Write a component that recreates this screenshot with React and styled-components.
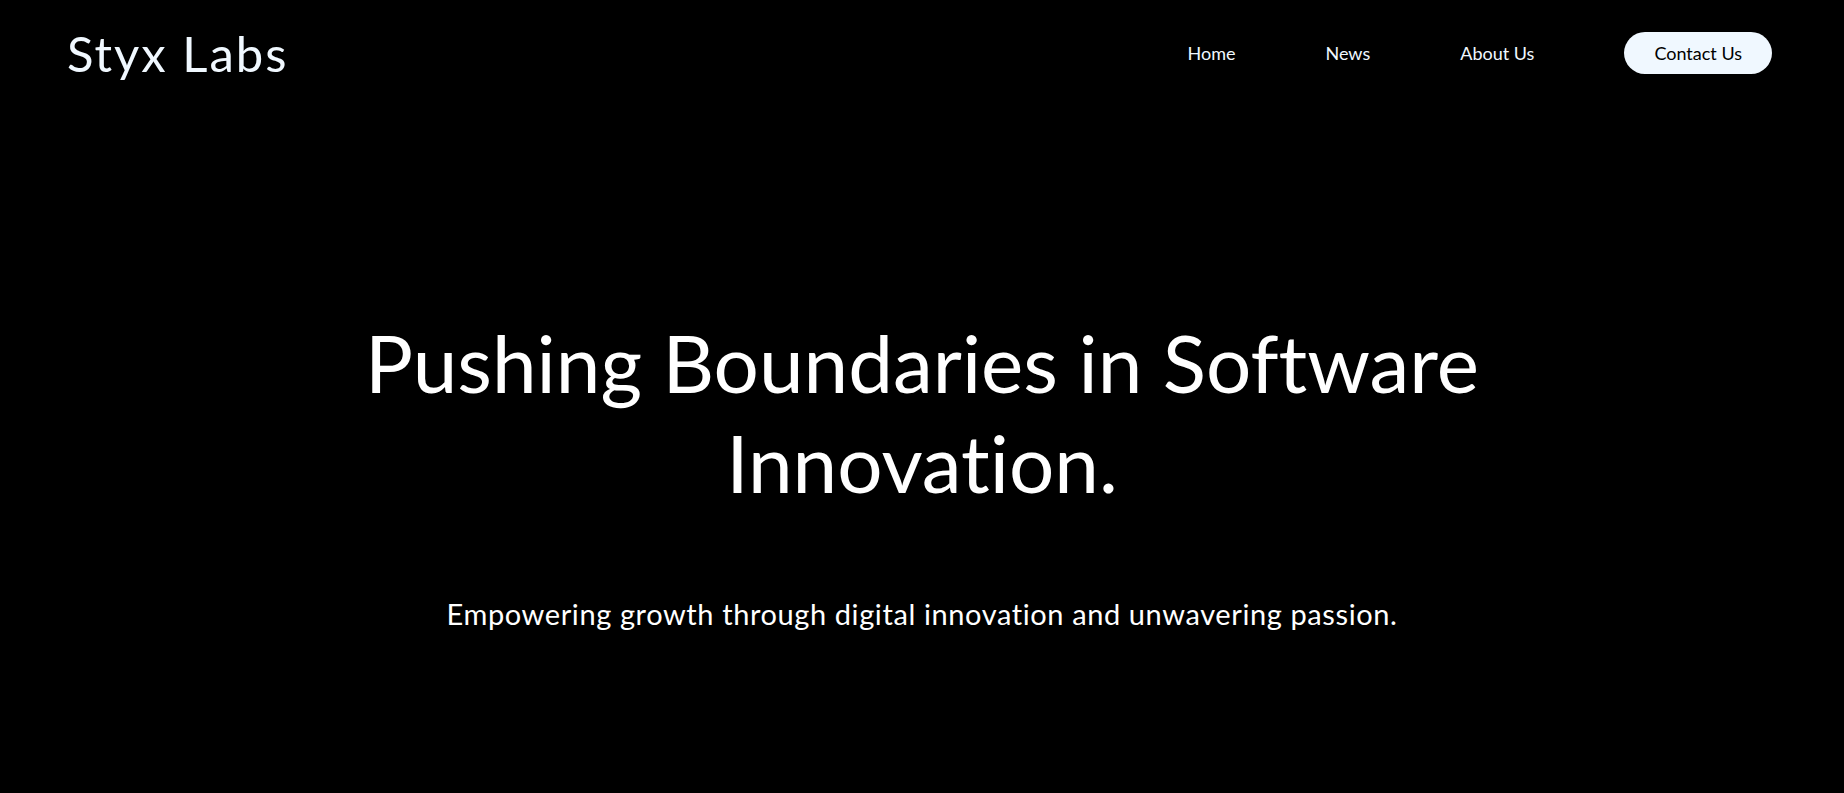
import styled, { createGlobalStyle } from "styled-components"

const GlobalStyle = createGlobalStyle`
  html, body {
    margin: 0;
    padding: 0;
    background: #000;
  }
  body {
    font-family: Lato, "Open Sans", sans-serif;
    font-variant-ligatures: none;
    color: aliceblue;
  }
`

const Page = styled.div`
  width: 100%;
  min-height: 793px;
  background: #000;
`

const Header = styled.header`
  display: flex;
  justify-content: space-between;
  align-items: center;
  height: 106px;
  padding: 0 72px 0 67px;
`

const Logo = styled.a`
  font-size: 49px;
  font-weight: 400;
  letter-spacing: 2px;
  color: aliceblue;
  text-decoration: none;
`

const Nav = styled.nav`
  display: flex;
  align-items: center;
  gap: 90px;
`

const NavLink = styled.a`
  font-size: 18px;
  color: aliceblue;
  text-decoration: none;
`

const ContactButton = styled.a`
  display: inline-flex;
  align-items: center;
  justify-content: center;
  height: 42px;
  padding: 0 30px;
  border-radius: 21px;
  background: aliceblue;
  color: #000;
  font-size: 18px;
  text-decoration: none;
`

const Hero = styled.section`
  display: flex;
  flex-direction: column;
  align-items: center;
  text-align: center;
  padding-top: 206px;
`

const Title = styled.h1`
  margin: 0;
  max-width: 1200px;
  font-size: 80px;
  font-weight: 400;
  line-height: 100px;
  color: #fff;
`

const Subtitle = styled.p`
  margin: 84px 0 0;
  font-size: 29px;
  letter-spacing: 0.6px;
  color: #fff;
`

const App = () => {
  return (
    <Page>
      <GlobalStyle />
      <Header>
        <Logo href="/">Styx Labs</Logo>
        <Nav>
          <NavLink href="/">Home</NavLink>
          <NavLink href="/news">News</NavLink>
          <NavLink href="/about">About Us</NavLink>
          <ContactButton href="/contact">Contact Us</ContactButton>
        </Nav>
      </Header>
      <Hero>
        <Title>Pushing Boundaries in Software Innovation.</Title>
        <Subtitle>Empowering growth through digital innovation and unwavering passion.</Subtitle>
      </Hero>
    </Page>
  )
}

export default App
